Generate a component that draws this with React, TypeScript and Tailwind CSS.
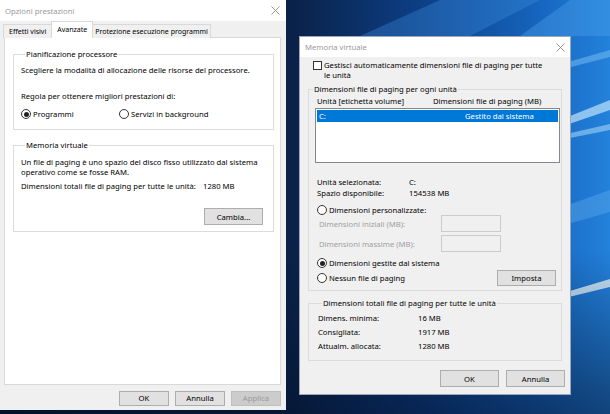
import React from 'react';

// Finestre "Opzioni prestazioni" e "Memoria virtuale" sopra lo sfondo di Windows 10

function CloseIcon() {
  return (
    <svg width="9" height="9" viewBox="0 0 9 9" className="shrink-0">
      <path d="M0.5 0.5 L8.5 8.5 M8.5 0.5 L0.5 8.5" stroke="#8a8a8a" strokeWidth="0.9" />
    </svg>
  );
}

function Radio({ checked }: { checked?: boolean }) {
  return (
    <span className="w-[10px] h-[10px] rounded-full border border-[#333333] bg-white flex items-center justify-center shrink-0">
      {checked && <span className="w-[5px] h-[5px] rounded-full bg-[#222222]" />}
    </span>
  );
}

function Btn({ label, className = '', disabled }: { label: string; className?: string; disabled?: boolean }) {
  return (
    <div
      className={`flex items-center justify-center border ${
        disabled ? 'bg-[#cccccc] border-[#bfbfbf] text-[#9a9a9a]' : 'bg-[#e1e1e1] border-[#adadad] text-[#000000]'
      } ${className}`}
    >
      {label}
    </div>
  );
}

function Wallpaper() {
  return (
    <svg className="absolute inset-0" width="610" height="414" viewBox="0 0 610 414">
      <defs>
        <linearGradient id="wp" x1="0" y1="0" x2="1" y2="0">
          <stop offset="0" stopColor="#061431" />
          <stop offset="0.48" stopColor="#0a2249" />
          <stop offset="0.7" stopColor="#0d4088" />
          <stop offset="0.88" stopColor="#1664bd" />
          <stop offset="1" stopColor="#2382dc" />
        </linearGradient>
        <linearGradient id="dark" x1="0" y1="0" x2="0" y2="1">
          <stop offset="0.6" stopColor="#03102a" stopOpacity="0" />
          <stop offset="1" stopColor="#03102a" stopOpacity="0.55" />
        </linearGradient>
      </defs>
      <rect width="610" height="414" fill="url(#wp)" />
      <polygon points="360,36 470,36 540,0 440,0" fill="#3d8fe0" opacity="0.35" />
      <polygon points="520,36 610,36 610,0 570,0" fill="#4aa0ec" opacity="0.4" />
      <polygon points="540,70 610,50 610,57 540,75" fill="#7cc0f4" opacity="0.5" />
      <polygon points="540,128 610,100 610,110 540,134" fill="#bfe3fb" opacity="0.7" />
      <polygon points="540,140 610,124 610,130 540,144" fill="#9fd2f7" opacity="0.6" />
      <polygon points="540,215 610,190 610,212 540,232" fill="#5aa6ec" opacity="0.45" />
      <polygon points="540,300 610,279 610,287 540,304" fill="#e3f3fd" opacity="0.85" />
      <rect width="610" height="414" fill="url(#dark)" />
    </svg>
  );
}

function PerformanceOptions() {
  return (
    <div className="absolute left-0 top-0 w-[286px] h-[410px] bg-[#f0f0f0] flex flex-col">
      <div className="h-[21px] bg-white flex items-center justify-between pl-[5px] pr-[6px] shrink-0">
        <span className="text-[#9a9a9a]">Opzioni prestazioni</span>
        <CloseIcon />
      </div>

      <div className="flex-1 flex flex-col pl-[4px] pr-[5px]">
        <div className="h-[17px] flex items-end -ml-[1px] relative z-10 text-[7px]">
          <div className="h-[14px] px-[5px] flex items-center border border-b-0 border-[#d9d9d9] bg-[#f0f0f0]">
            Effetti visivi
          </div>
          <div className="h-[17px] px-[5px] flex items-center border border-b-0 border-[#d9d9d9] bg-white -ml-px">
            Avanzate
          </div>
          <div className="h-[14px] px-[2px] flex items-center border border-b-0 border-l-0 border-[#d9d9d9] bg-[#f0f0f0]">
            Protezione esecuzione programmi
          </div>
        </div>

        <div className="h-[348px] bg-white border border-[#d9d9d9] -mt-px flex flex-col pt-[11px] pl-[8px] pr-[6px]">
          <fieldset className="border border-[#dcdcdc] px-[7px] pb-[10px]">
            <legend className="ml-[4px] px-[1px]">Pianificazione processore</legend>
            <div className="mt-[6px] whitespace-nowrap">
              Scegliere la modalità di allocazione delle risorse del processore.
            </div>
            <div className="mt-[16px] whitespace-nowrap">Regola per ottenere migliori prestazioni di:</div>
            <div className="mt-[8px] flex items-center">
              <div className="w-[98px] flex items-center gap-[2px]">
                <Radio checked />
                <span>Programmi</span>
              </div>
              <div className="flex items-center gap-[2px]">
                <Radio />
                <span>Servizi in background</span>
              </div>
            </div>
          </fieldset>

          <fieldset className="mt-[10px] border border-[#dcdcdc] pl-[7px] pr-[10px] pb-[6px] flex flex-col">
            <legend className="ml-[4px] px-[1px]">Memoria virtuale</legend>
            <div className="mt-[7px] whitespace-nowrap">
              Un file di paging è uno spazio del disco fisso utilizzato dal sistema
              <br />
              operativo come se fosse RAM.
            </div>
            <div className="mt-[4px] flex whitespace-nowrap">
              <span className="w-[182px]">Dimensioni totali file di paging per tutte le unità:</span>
              <span>1280 MB</span>
            </div>
            <Btn label="Cambia..." className="self-end mt-[17px] w-[59px] h-[17px]" />
          </fieldset>
        </div>

        <div className="flex-1 flex items-center justify-end gap-[6px] pt-[1px]">
          <Btn label="OK" className="w-[50px] h-[15px]" />
          <Btn label="Annulla" className="w-[50px] h-[15px]" />
          <Btn label="Applica" className="w-[50px] h-[15px]" disabled />
        </div>
      </div>
    </div>
  );
}

function VirtualMemory() {
  return (
    <div className="absolute left-[299px] top-[36px] w-[272px] h-[359px] bg-[#f0f0f0] border border-[#9ba7b6] flex flex-col">
      <div className="h-[20px] bg-white flex items-center justify-between pl-[5px] pr-[5px] shrink-0">
        <span className="text-[#9a9a9a]">Memoria virtuale</span>
        <CloseIcon />
      </div>

      <div className="flex-1 flex flex-col">
        <div className="mt-[3px] ml-[13px] flex items-start gap-[2px]">
          <span className="mt-[1px] w-[9px] h-[9px] border border-[#333333] bg-white shrink-0" />
          <div className="whitespace-nowrap">
            Gestisci automaticamente dimensioni file di paging per tutte
            <br />
            le unità
          </div>
        </div>

        <fieldset className="mt-[4px] mx-[8px] border border-[#dcdcdc] pb-[4px] flex flex-col">
          <legend className="ml-[4px] px-[1px]">Dimensioni file di paging per ogni unità</legend>
          <div className="mt-[2px] pl-[8px] flex whitespace-nowrap">
            <span className="w-[116px]">Unità [etichetta volume]</span>
            <span>Dimensioni file di paging (MB)</span>
          </div>
          <div className="mt-[2px] ml-[6px] mr-[1px] h-[55px] bg-white border border-[#828790] p-px">
            <div className="h-[12px] bg-[#0078d7] text-white flex items-center pl-[2px]">
              <span className="w-[146px]">C:</span>
              <span>Gestito dal sistema</span>
            </div>
          </div>

          <div className="mt-[14px] pl-[8px] leading-[11px]">
            <div className="flex">
              <span className="w-[92px]">Unità selezionata:</span>
              <span>C:</span>
            </div>
            <div className="flex">
              <span className="w-[92px]">Spazio disponibile:</span>
              <span>154538 MB</span>
            </div>
          </div>

          <div className="mt-[6px] pl-[8px] flex items-center gap-[2px]">
            <Radio />
            <span>Dimensioni personalizzate:</span>
          </div>
          <div className="pl-[10px] h-[17px] flex items-center text-[#a0a0a0]">
            <span className="w-[122px]">Dimensioni iniziali (MB):</span>
            <span className="w-[60px] h-[17px] border border-[#cccccc] bg-[#f0f0f0]" />
          </div>
          <div className="mt-[3px] pl-[10px] h-[17px] flex items-center text-[#a0a0a0]">
            <span className="w-[122px]">Dimensioni massime (MB):</span>
            <span className="w-[60px] h-[17px] border border-[#cccccc] bg-[#f0f0f0]" />
          </div>
          <div className="mt-[6px] pl-[8px] flex items-center gap-[2px]">
            <Radio checked />
            <span>Dimensioni gestite dal sistema</span>
          </div>
          <div className="mt-[2px] pl-[8px] pr-[5px] h-[16px] flex items-center justify-between">
            <div className="flex items-center gap-[2px]">
              <Radio />
              <span>Nessun file di paging</span>
            </div>
            <Btn label="Imposta" className="w-[59px] h-[16px]" />
          </div>
        </fieldset>

        <fieldset className="mt-[7px] mx-[8px] border border-[#dcdcdc] pl-[9px] pb-[7px] leading-[14px]">
          <legend className="ml-[4px] px-[1px] leading-[10px]">Dimensioni totali file di paging per tutte le unità</legend>
          <div className="mt-[3px] flex">
            <span className="w-[100px]">Dimens. minima:</span>
            <span>16 MB</span>
          </div>
          <div className="flex">
            <span className="w-[100px]">Consigliata:</span>
            <span>1917 MB</span>
          </div>
          <div className="flex">
            <span className="w-[100px]">Attualm. allocata:</span>
            <span>1280 MB</span>
          </div>
        </fieldset>

        <div className="mt-[9px] pr-[5px] flex justify-end gap-[7px]">
          <Btn label="OK" className="w-[59px] h-[17px]" />
          <Btn label="Annulla" className="w-[59px] h-[17px]" />
        </div>
      </div>
    </div>
  );
}

export default function App() {
  return (
    <div className="relative w-[610px] h-[414px] overflow-hidden font-['Noto_Sans',sans-serif] text-[7.7px] leading-[10px] text-[#000000]">
      <Wallpaper />
      <PerformanceOptions />
      <VirtualMemory />
    </div>
  );
}
